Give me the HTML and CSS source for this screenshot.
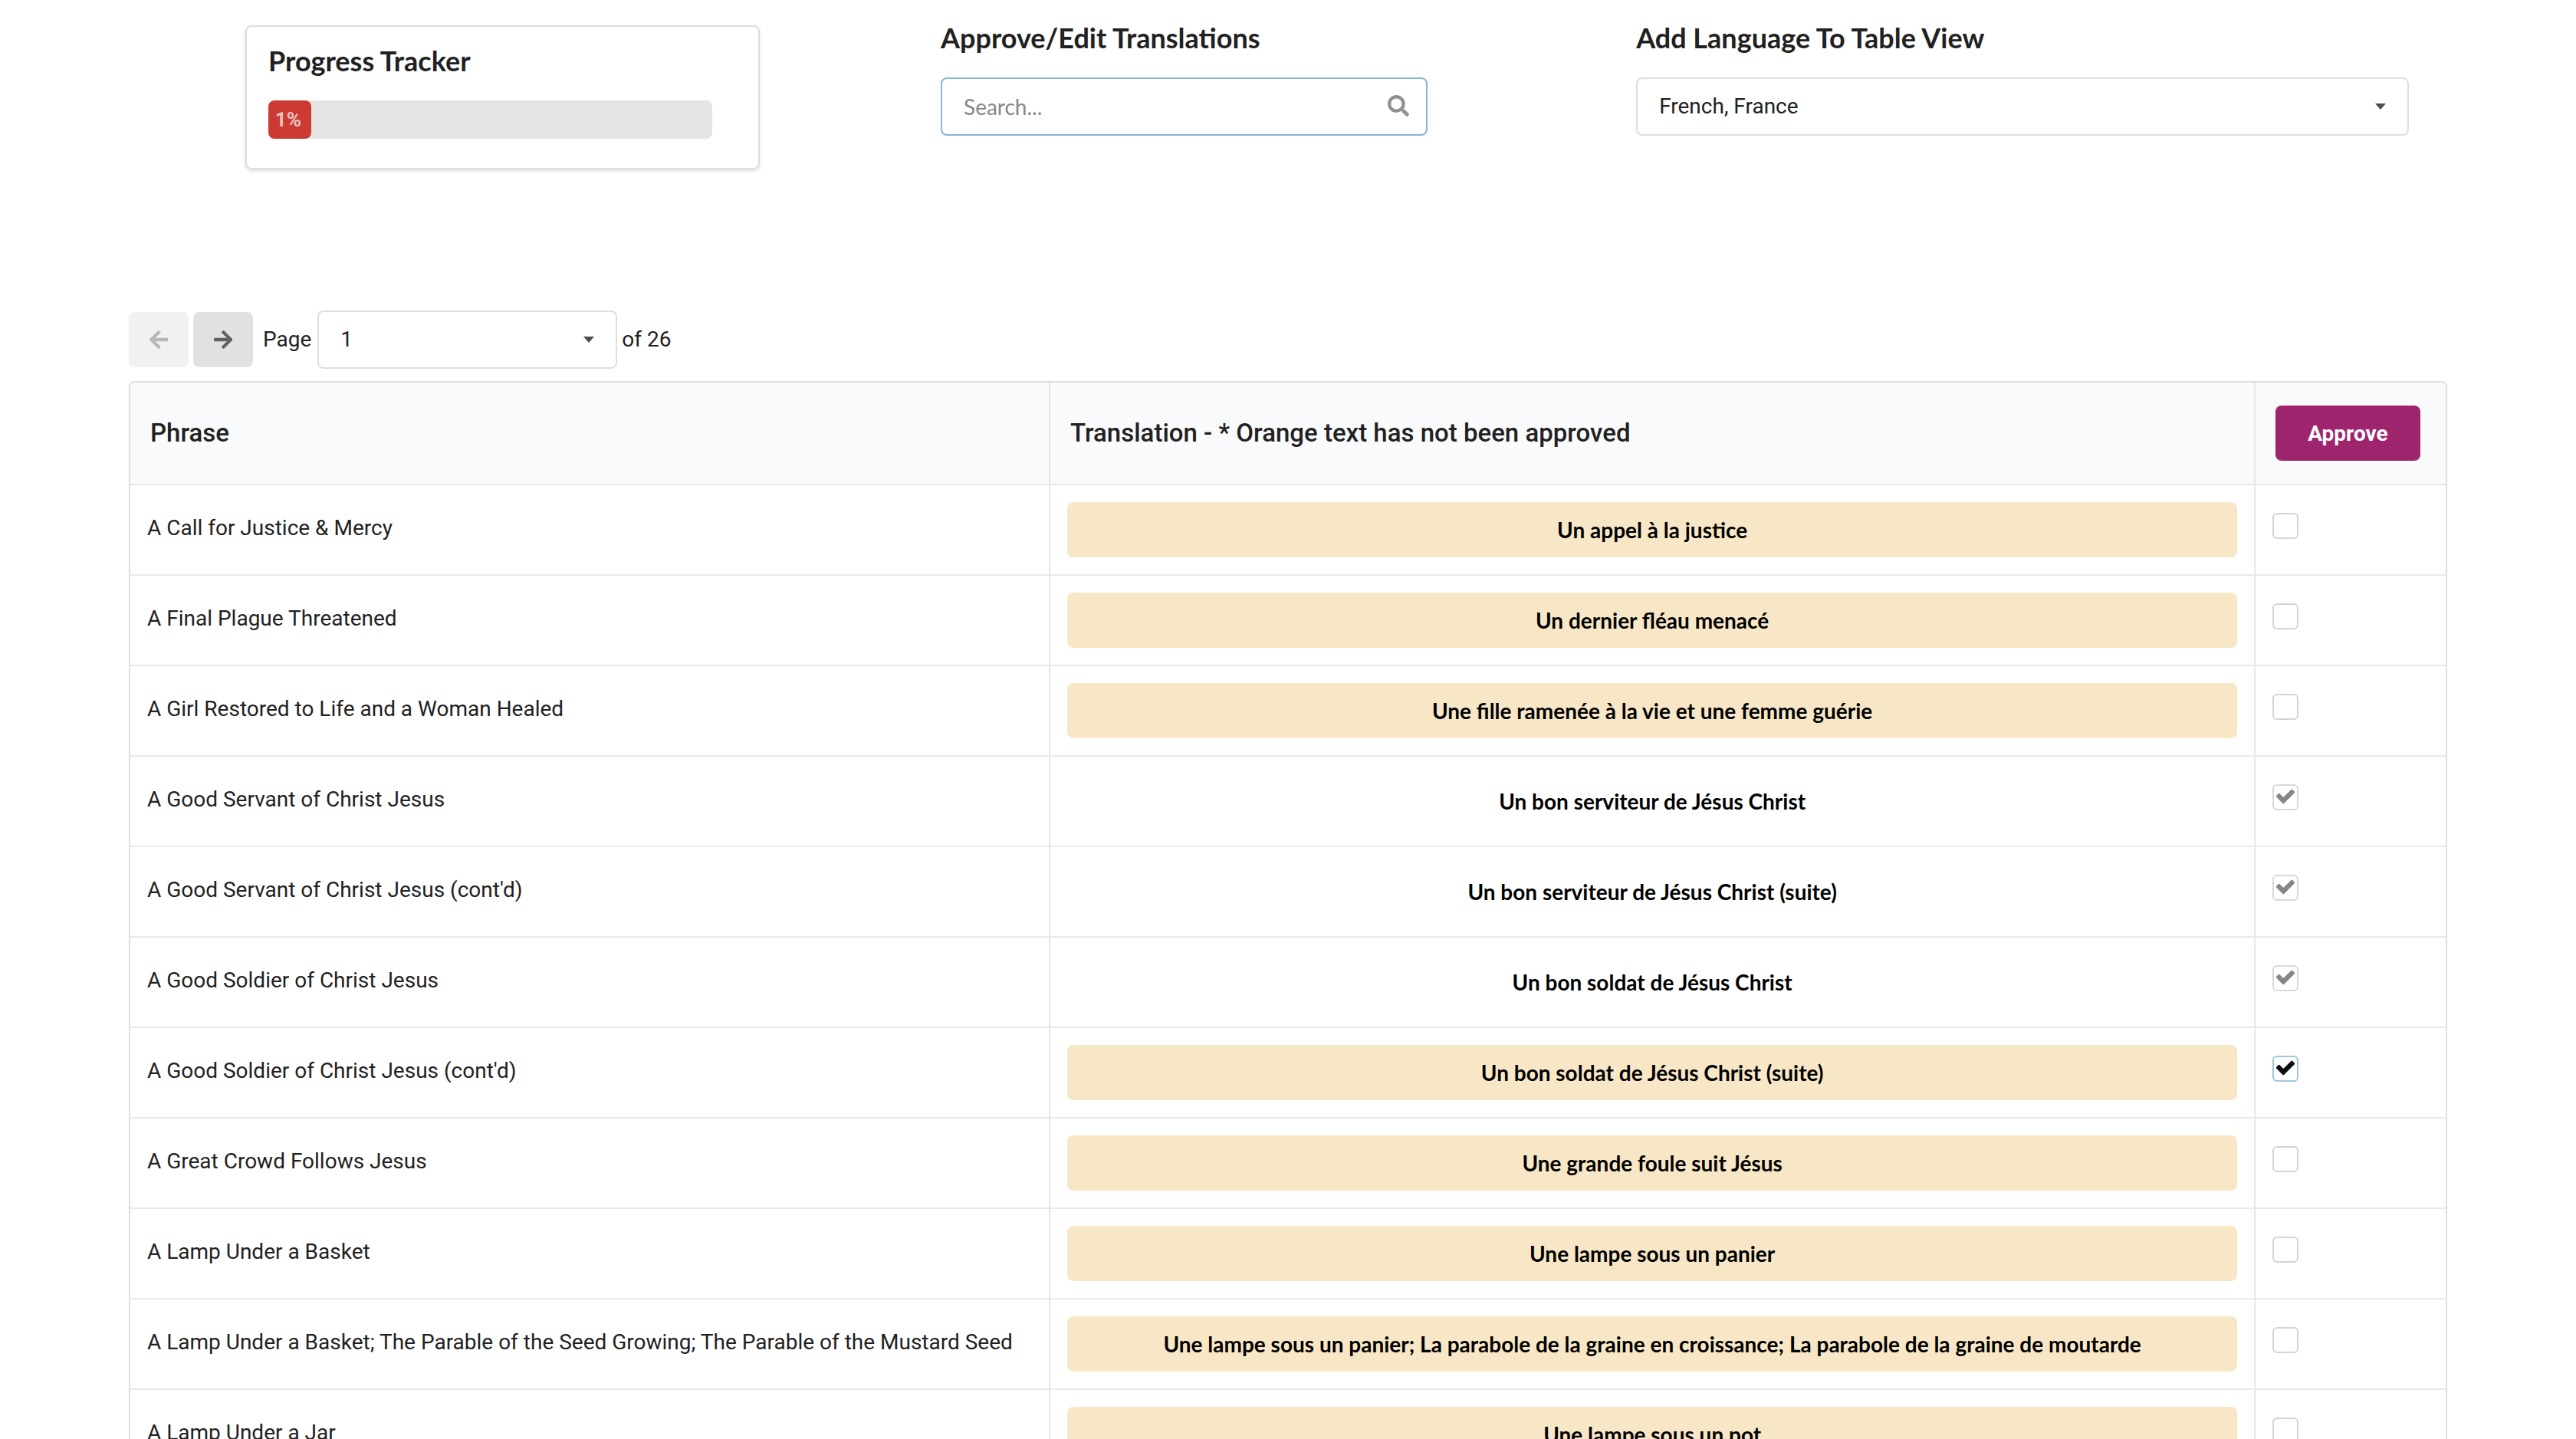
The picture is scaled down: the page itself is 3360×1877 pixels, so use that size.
FILE: index.html
```html
<!DOCTYPE html>
<html lang="en">
<head>
<meta charset="utf-8">
<title>Approve/Edit Translations</title>
<link rel="stylesheet" href="styles.css">
</head>
<body>
<svg class="symbols">
  <symbol id="icon-check" viewBox="0 0 34 34"><path d="M14.3 23.6L6.4 15.7L8.6 13.4L14.3 19.1L25.2 8.2L27.5 10.4Z"/></symbol>
</svg>
<main class="page">
  <header class="tools">
    <section class="card">
      <h2 class="title">Progress Tracker</h2>
      <div class="progress" role="progressbar" aria-valuenow="1" aria-valuemin="0" aria-valuemax="100" aria-label="Progress">
        <div class="bar">1%</div>
      </div>
    </section>
    <section>
      <h2 class="title"><label for="search">Approve/Edit Translations</label></h2>
      <div class="search">
        <input id="search" class="search-input" type="text" placeholder="Search...">
        <svg class="search-icon" viewBox="0 0 512 512" aria-hidden="true"><path d="M505 442.7L405.3 343c-4.5-4.5-10.6-7-17-7H372c27.6-35.3 44-79.7 44-128C416 93.1 322.9 0 208 0S0 93.1 0 208s93.1 208 208 208c48.3 0 92.7-16.4 128-44v16.3c0 6.4 2.5 12.5 7 17l99.7 99.7c9.4 9.4 24.6 9.4 33.9 0l28.3-28.3c9.4-9.4 9.4-24.6.1-34zM208 336c-70.7 0-128-57.2-128-128 0-70.7 57.2-128 128-128 70.7 0 128 57.2 128 128 0 70.7-57.2 128-128 128z"/></svg>
      </div>
    </section>
    <section>
      <h2 class="title"><label for="language">Add Language To Table View</label></h2>
      <div class="dropdown">
        <select id="language" class="select"><option>French, France</option></select>
      </div>
    </section>
  </header>

  <nav class="pager" aria-label="Pagination">
    <button class="button icon-button" type="button" disabled aria-label="Previous page"><svg class="arrow" viewBox="0 0 448 512"><path d="M257.5 445.1l-22.2 22.2c-9.4 9.4-24.6 9.4-33.9 0L7 273c-9.4-9.4-9.4-24.6 0-33.9L201.4 44.7c9.4-9.4 24.6-9.4 33.9 0l22.2 22.2c9.5 9.5 9.3 25-.4 34.3L136.6 216H424c13.3 0 24 10.7 24 24v32c0 13.3-10.7 24-24 24H136.6l120.5 114.8c9.8 9.3 10 24.8.4 34.3z"/></svg></button>
    <button class="button icon-button" type="button" aria-label="Next page"><svg class="arrow" viewBox="0 0 448 512"><path d="M190.5 66.9l22.2-22.2c9.4-9.4 24.6-9.4 33.9 0L441 239c9.4 9.4 9.4 24.6 0 33.9L246.6 467.3c-9.4 9.4-24.6 9.4-33.9 0l-22.2-22.2c-9.5-9.5-9.3-25 .4-34.3L311.4 296H24c-13.3 0-24-10.7-24-24v-32c0-13.3 10.7-24 24-24h287.4L190.9 101.2c-9.8-9.3-10-24.8-.4-34.3z"/></svg></button>
    <label class="pager-label" for="page-number">Page</label>
    <div class="dropdown page-dropdown">
      <select id="page-number" class="select"><option>1</option></select>
    </div>
    <span>of 26</span>
  </nav>

  <table class="phrases">
    <thead>
      <tr>
        <th class="phrase-col">Phrase</th>
        <th>Translation - * Orange text has not been approved</th>
        <th class="approve-col"><button class="button approve" type="button">Approve</button></th>
      </tr>
    </thead>
    <tbody>
      <tr>
        <td>A Call for Justice &amp; Mercy</td>
        <td class="translation"><button class="button text pending" type="button">Un appel à la justice</button></td>
        <td><label class="check"><input type="checkbox" aria-label="Approve A Call for Justice &amp; Mercy"><svg><use href="#icon-check"/></svg></label></td>
      </tr>
      <tr>
        <td>A Final Plague Threatened</td>
        <td class="translation"><button class="button text pending" type="button">Un dernier fléau menacé</button></td>
        <td><label class="check"><input type="checkbox" aria-label="Approve A Final Plague Threatened"><svg><use href="#icon-check"/></svg></label></td>
      </tr>
      <tr>
        <td>A Girl Restored to Life and a Woman Healed</td>
        <td class="translation"><button class="button text pending" type="button">Une fille ramenée à la vie et une femme guérie</button></td>
        <td><label class="check"><input type="checkbox" aria-label="Approve A Girl Restored to Life and a Woman Healed"><svg><use href="#icon-check"/></svg></label></td>
      </tr>
      <tr>
        <td>A Good Servant of Christ Jesus</td>
        <td class="translation"><button class="button text" type="button">Un bon serviteur de Jésus Christ</button></td>
        <td><label class="check"><input type="checkbox" checked disabled aria-label="Approve A Good Servant of Christ Jesus"><svg><use href="#icon-check"/></svg></label></td>
      </tr>
      <tr>
        <td>A Good Servant of Christ Jesus (cont'd)</td>
        <td class="translation"><button class="button text" type="button">Un bon serviteur de Jésus Christ (suite)</button></td>
        <td><label class="check"><input type="checkbox" checked disabled aria-label="Approve A Good Servant of Christ Jesus (cont'd)"><svg><use href="#icon-check"/></svg></label></td>
      </tr>
      <tr>
        <td>A Good Soldier of Christ Jesus</td>
        <td class="translation"><button class="button text" type="button">Un bon soldat de Jésus Christ</button></td>
        <td><label class="check"><input type="checkbox" checked disabled aria-label="Approve A Good Soldier of Christ Jesus"><svg><use href="#icon-check"/></svg></label></td>
      </tr>
      <tr>
        <td>A Good Soldier of Christ Jesus (cont'd)</td>
        <td class="translation"><button class="button text pending" type="button">Un bon soldat de Jésus Christ (suite)</button></td>
        <td><label class="check"><input type="checkbox" checked aria-label="Approve A Good Soldier of Christ Jesus (cont'd)"><svg><use href="#icon-check"/></svg></label></td>
      </tr>
      <tr>
        <td>A Great Crowd Follows Jesus</td>
        <td class="translation"><button class="button text pending" type="button">Une grande foule suit Jésus</button></td>
        <td><label class="check"><input type="checkbox" aria-label="Approve A Great Crowd Follows Jesus"><svg><use href="#icon-check"/></svg></label></td>
      </tr>
      <tr>
        <td>A Lamp Under a Basket</td>
        <td class="translation"><button class="button text pending" type="button">Une lampe sous un panier</button></td>
        <td><label class="check"><input type="checkbox" aria-label="Approve A Lamp Under a Basket"><svg><use href="#icon-check"/></svg></label></td>
      </tr>
      <tr>
        <td>A Lamp Under a Basket; The Parable of the Seed Growing; The Parable of the Mustard Seed</td>
        <td class="translation"><button class="button text pending" type="button">Une lampe sous un panier; La parabole de la graine en croissance; La parabole de la graine de moutarde</button></td>
        <td><label class="check"><input type="checkbox" aria-label="Approve A Lamp Under a Basket; The Parable of the Seed Growing; The Parable of the Mustard Seed"><svg><use href="#icon-check"/></svg></label></td>
      </tr>
      <tr>
        <td>A Lamp Under a Jar</td>
        <td class="translation"><button class="button text pending" type="button">Une lampe sous un pot</button></td>
        <td><label class="check"><input type="checkbox" aria-label="Approve A Lamp Under a Jar"><svg><use href="#icon-check"/></svg></label></td>
      </tr>
    </tbody>
  </table>
</main>
</body>
</html>
```
FILE: styles.css
```css
* {
  box-sizing: border-box;
}

body {
  margin: 0;
  background: #fff;
  color: #212121;
  font: 28px/40px Roboto, sans-serif;
}

.symbols {
  display: none;
}

.page {
  padding: 26px 5% 0;
}

/* Tools above the table */
.tools {
  display: grid;
  grid-template-columns: 9fr 9fr 10fr;
  align-items: start;
  margin-bottom: 184px;
  padding: 0 50px 0 152px;
}

.title {
  margin: 0 0 29px;
  font: bold 36px/46px Lato, sans-serif;
}

.card {
  width: 74%;
  margin-top: 7px;
  padding: 21px 60px 38px 28px;
  border: 2px solid #dededf;
  border-radius: 8px;
  box-shadow: 0 2px 4px rgba(34, 36, 38, 0.15);
}

.progress {
  border-radius: 8px;
  background: #e5e5e5;
}

.bar {
  width: 1%;
  min-width: 56px;
  padding-right: 13px;
  border-radius: 8px;
  background: #cb3b34;
  color: rgba(255, 255, 255, 0.7);
  font-size: 26px;
  font-weight: bold;
  line-height: 50px;
  text-align: right;
}

.search {
  position: relative;
  width: 70%;
}

.search-input,
.select {
  display: block;
  width: 100%;
  height: 76px;
  margin: 0;
  border: 2px solid #dededf;
  border-radius: 8px;
  outline: 0;
  background: #fff;
  color: inherit;
}

.search-input {
  padding: 0 76px 0 28px;
  border-color: #8cb4d6;
  font: 28px Lato, sans-serif;
}

.search-input::placeholder {
  color: #868686;
}

.search-icon {
  position: absolute;
  top: 23px;
  right: 24px;
  width: 28px;
  height: 28px;
  fill: #909090;
}

.dropdown {
  position: relative;
}

.dropdown::after {
  content: "";
  position: absolute;
  top: 34px;
  right: 30px;
  border: 7px solid transparent;
  border-top: 8px solid #4d4d4d;
  border-bottom: 0;
  pointer-events: none;
}

.select {
  appearance: none;
  padding: 0 60px 0 28px;
  font: inherit;
}

/* Buttons */
.button {
  height: 72px;
  margin: 0;
  padding: 0 42px;
  border: 0;
  border-radius: 8px;
  background: #e0e1e2;
  color: #000;
  font: bold 28px Lato, sans-serif;
}

.icon-button {
  display: grid;
  place-items: center;
  width: 78px;
  padding: 0;
}

.icon-button:disabled {
  opacity: 0.45;
}

.arrow {
  height: 28px;
  fill: #616162;
}

.approve {
  background: #9e246e;
  color: #fff;
  font-family: Roboto, sans-serif;
}

.text {
  display: block;
  width: 100%;
  background: transparent;
}

.pending {
  background: #f8e7c7;
}

/* Pagination */
.pager {
  display: flex;
  align-items: center;
  gap: 6px;
  margin-bottom: 16px;
}

.pager-label {
  padding: 0 2px 0 7px;
}

.page-dropdown {
  width: 391px;
}

/* Phrase table */
.phrases {
  width: 100%;
  table-layout: fixed;
  border: 2px solid #dededf;
  border-spacing: 0;
  border-radius: 8px;
}

.phrase-col {
  width: 39.67%;
}

.approve-col {
  width: 8.27%;
}

th {
  padding: 30px 26px;
  background: #f9fafb;
  font-size: 33px;
  font-weight: 500;
  text-align: left;
}

th:first-child {
  border-top-left-radius: 6px;
}

th:last-child {
  border-top-right-radius: 6px;
}

td {
  padding: 36px 22px 0;
  border-top: 2px solid #e8e9e9;
  vertical-align: top;
}

th + th,
td + td {
  border-left: 2px solid #e5e6e7;
}

.translation {
  padding: 22px;
}

.check {
  display: grid;
  width: 34px;
}

.check input,
.check svg {
  grid-area: 1 / 1;
  width: 34px;
  height: 34px;
}

.check input {
  appearance: none;
  margin: 0;
  border: 2px solid #d4d4d5;
  border-radius: 6px;
}

.check svg {
  visibility: hidden;
  color: #0d0d0d;
  fill: currentColor;
  stroke: currentColor;
  stroke-width: 3px;
  stroke-linejoin: round;
  pointer-events: none;
}

.check input:checked {
  border-color: #9dc7da;
}

.check input:checked + svg {
  visibility: visible;
}

.check input:disabled {
  border-color: #d9d9da;
}

.check input:disabled + svg {
  color: #868686;
}
```
